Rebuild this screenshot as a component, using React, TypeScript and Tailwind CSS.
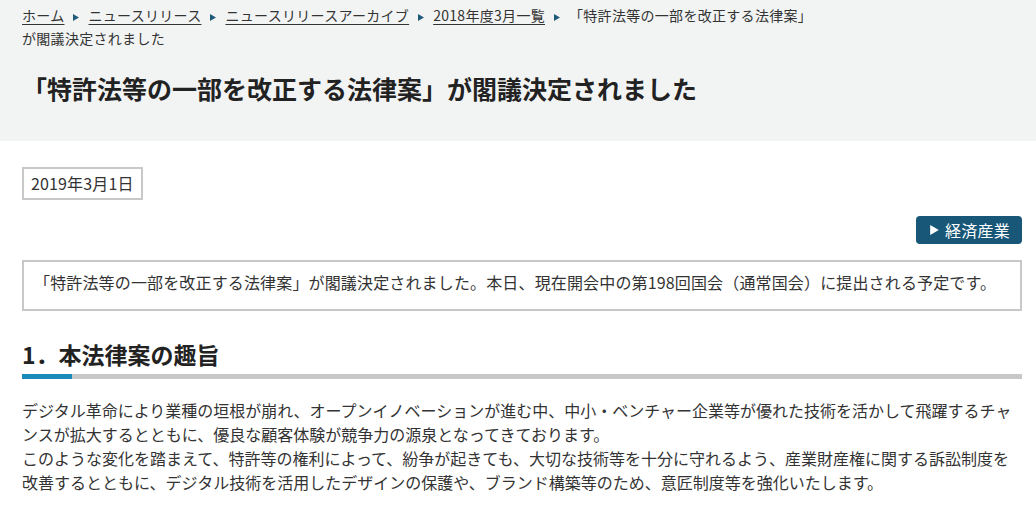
import type { ReactNode } from "react"

const font = { fontFamily: '"Noto Sans CJK JP", "Noto Sans", sans-serif' }

const crumbs = ["ホーム", "ニュースリリース", "ニュースリリースアーカイブ", "2018年度3月一覧"]

function Arrow({ className }: { className: string }) {
  return (
    <svg viewBox="0 0 6 7" className={className} aria-hidden>
      <path d="M0 0 L6 3.5 L0 7 Z" fill="currentColor" />
    </svg>
  )
}

function Sep() {
  return <Arrow className="mx-[9px] inline-block h-[7px] w-[6px] align-[0px] text-[#1d5b7a]" />
}

function Box({ children, className }: { children: ReactNode; className: string }) {
  return <div className={`border-2 border-[#c8c8c8] ${className}`}>{children}</div>
}

export default function App() {
  return (
    <div className="min-h-screen bg-white text-[#333]" style={font}>
      <div className="bg-[#f2f4f4] pb-[35px] pl-[22px] pr-[14px] pt-[4px]">
        <nav className="text-[14px] leading-[23px] tracking-[0.3px]">
          {crumbs.map(c => (
            <span key={c}>
              <a href="#" className="text-[#333] underline underline-offset-[3px]">{c}</a>
              <Sep />
            </span>
          ))}
          <span>「特許法等の一部を改正する法律案」<br />が閣議決定されました</span>
        </nav>
        <h1 className="mt-[20px] text-[25px] font-bold leading-[36px] text-[#222]">
          「特許法等の一部を改正する法律案」が閣議決定されました
        </h1>
      </div>

      <div className="pl-[22px] pr-[14px] pt-[26px]">
        <div className="flex">
          <Box className="px-[7px] py-[2px] text-[16px] leading-[25px] tracking-[0.15px]">2019年3月1日</Box>
        </div>

        <div className="mt-[16px] flex justify-end">
          <a href="#" className="flex h-[28px] items-center rounded-[4px] bg-[#185777] pl-[14px] pr-[12px] text-[16px] tracking-[0.25px] text-white">
            <Arrow className="mr-[6px] h-[10px] w-[9px]" />
            経済産業
          </a>
        </div>

        <Box className="mt-[16px] pb-[15px] pl-[10px] pr-[10px] pt-[8px] text-[16px] leading-[24px] tracking-[0.15px]">
          「特許法等の一部を改正する法律案」が閣議決定されました。本日、現在開会中の第198回国会（通常国会）に提出される予定です。
        </Box>

        <h2 className="mt-[28px] text-[23px] font-bold leading-[30px] text-[#222]">1．本法律案の趣旨</h2>
        <div className="mt-[5px] flex h-[5px] bg-[#c8c8c8]">
          <div className="w-[50px] bg-[#1a8bb8]" />
        </div>

        <p className="mt-[19px] text-[16px] leading-[24px]">
          デジタル革命により業種の垣根が崩れ、オープンイノベーションが進む中、中小・ベンチャー企業等が優れた技術を活かして飛躍するチャ
          <br />
          ンスが拡大するとともに、優良な顧客体験が競争力の源泉となってきております。
          <br />
          このような変化を踏まえて、特許等の権利によって、紛争が起きても、大切な技術等を十分に守れるよう、産業財産権に関する訴訟制度を
          <br />
          改善するとともに、デジタル技術を活用したデザインの保護や、ブランド構築等のため、意匠制度等を強化いたします。
        </p>
      </div>
    </div>
  )
}
